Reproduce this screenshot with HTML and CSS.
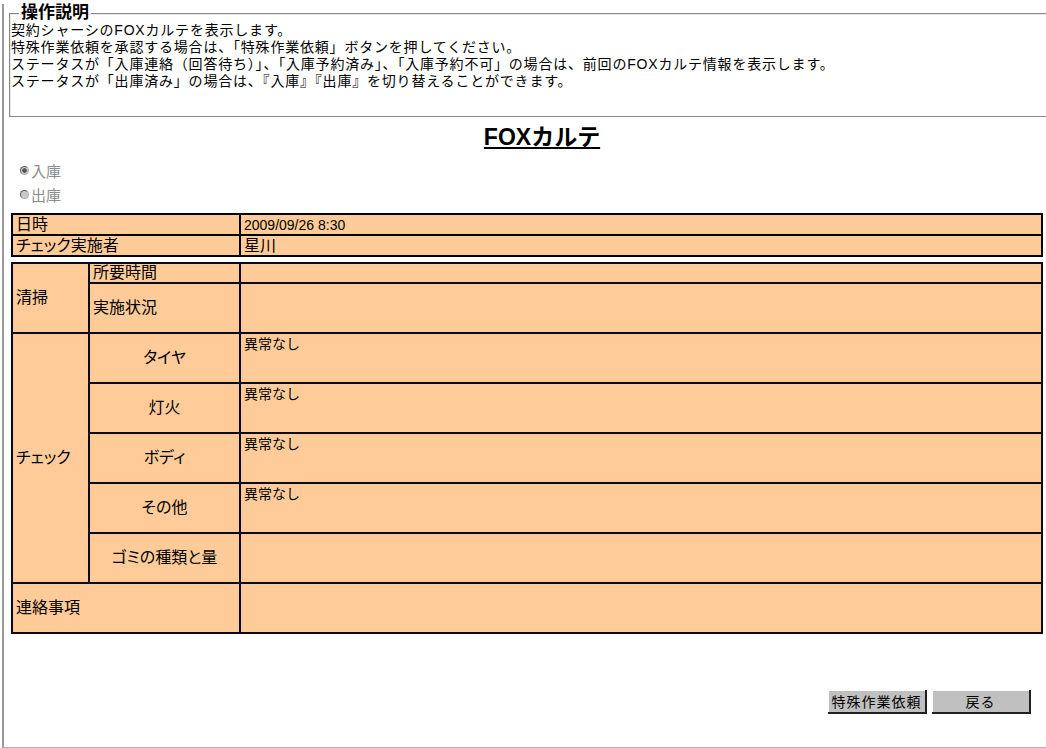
FILE: index.html
```html
<!DOCTYPE html>
<html>
<head>
  <meta charset="utf-8">
  <title>FOXカルテ</title>
  <link rel="stylesheet" href="styles.css">
</head>
<body>
  <div class="frame">
    <!-- 操作説明 -->
    <fieldset class="guide">
      <legend>操作説明</legend>
      <p>契約シャーシのFOXカルテを表示します。</p>
      <p>特殊作業依頼を承認する場合は、「特殊作業依頼」ボタンを押してください。</p>
      <p>ステータスが「入庫連絡（回答待ち）」、「入庫予約済み」、「入庫予約不可」の場合は、前回のFOXカルテ情報を表示します。</p>
      <p>ステータスが「出庫済み」の場合は、『入庫』『出庫』を切り替えることができます。</p>
    </fieldset>

    <h1 class="title"><span>FOXカルテ</span></h1>

    <div class="radios">
      <label><input type="radio" name="io" checked disabled>入庫</label>
      <label><input type="radio" name="io" disabled>出庫</label>
    </div>

    <table class="karte head">
      <tr>
        <th class="w1">日時</th>
        <td class="small">2009/09/26 8:30</td>
      </tr>
      <tr>
        <th class="w1">チェック実施者</th>
        <td>星川</td>
      </tr>
    </table>

    <table class="karte body">
      <tr class="short">
        <th class="c1" rowspan="2">清掃</th>
        <th class="c2 top">所要時間</th>
        <td></td>
      </tr>
      <tr>
        <th class="c2">実施状況</th>
        <td></td>
      </tr>
      <tr>
        <th class="c1" rowspan="5">チェック</th>
        <th class="c2 center">タイヤ</th>
        <td class="top">異常なし</td>
      </tr>
      <tr>
        <th class="c2 center">灯火</th>
        <td class="top">異常なし</td>
      </tr>
      <tr>
        <th class="c2 center">ボディ</th>
        <td class="top">異常なし</td>
      </tr>
      <tr>
        <th class="c2 center">その他</th>
        <td class="top">異常なし</td>
      </tr>
      <tr>
        <th class="c2 center">ゴミの種類と量</th>
        <td></td>
      </tr>
      <tr>
        <th colspan="2">連絡事項</th>
        <td></td>
      </tr>
    </table>

    <div class="buttons">
      <button class="button">特殊作業依頼</button>
      <button class="button">戻る</button>
    </div>
  </div>
</body>
</html>
```

FILE: styles.css
```css
/* 全体 */
body {
  margin: 0;
  background-color: #fff;
  font-family: "Liberation Sans", "Noto Sans CJK JP", sans-serif;
  font-size: 14px;
  color: #000;
  overflow: hidden;
}

.frame {
  margin-left: 2px;
  height: 745px;
  border-left: 2px solid #9a9a9a;
  border-bottom: 2px solid #b4b4b4;
  box-sizing: border-box;
  padding-left: 4px;
}

/* 操作説明 */
.guide {
  margin: 4px -30px 0 1px;
  padding: 0 0 26px 1px;
  border: 1px solid #8a8a8a;
  box-shadow: 1px 1px 0 #e8e8e8 inset;
}

.guide legend {
  margin-left: 8px;
  padding: 0 2px;
  font-size: 17px;
  font-weight: bold;
  line-height: 18px;
}

.guide p {
  margin: 0;
  line-height: 17px;
  letter-spacing: 0.8px;
}

/* タイトル */
.title {
  margin: 6px 0 0;
  padding-left: 30px;
  text-align: center;
  font-size: 23px;
  font-weight: bold;
  line-height: 28px;
}

.title span {
  text-decoration: underline;
  text-decoration-thickness: 2px;
  text-underline-offset: 2px;
}

/* 入庫・出庫 */
.radios {
  margin: 7px 0 0 12px;
  color: #8c8c8c;
  font-size: 15px;
}

.radios label {
  display: flex;
  align-items: center;
  height: 24px;
}

.radios input {
  appearance: none;
  width: 9px;
  height: 9px;
  margin: 0 2px 0 0;
  border-radius: 50%;
  border: 1px solid #b0b0b0;
  border-top-color: #606060;
  border-left-color: #606060;
  background-color: #c8c8c8;
}

.radios input:checked {
  background: radial-gradient(circle, #555 0 2px, #c8c8c8 2.5px);
}

/* カルテ表 */
.karte {
  width: 1032px;
  margin-left: 3px;
  border-collapse: collapse;
  background-color: #ffcc99;
  font-size: 16px;
  font-feature-settings: "palt";
}

.karte th,
.karte td {
  border: 2px solid #0a0a1e;
  padding: 0 3px;
  font-weight: normal;
  text-align: left;
  vertical-align: middle;
  line-height: 18px;
}

.head {
  margin-top: 7px;
  border: 2px solid #000;
}

.head th,
.head td {
  height: 19px;
  border-color: #000;
}

.head .w1 {
  width: 220px;
}

.small {
  font-size: 14px;
}

.body {
  margin-top: 5px;
}

.body tr {
  height: 50px;
}

.body tr.short {
  height: 20px;
}

.body .c1 {
  width: 69px;
}

.body .c2 {
  width: 143px;
}

.body .center {
  text-align: center;
}

.body .top {
  vertical-align: top;
  padding-top: 0;
}

.body td.top {
  font-size: 14px;
  font-feature-settings: normal;
  padding-top: 1px;
}

/* ボタン */
.buttons {
  display: flex;
  justify-content: flex-end;
  gap: 5px;
  margin: 56px 15px 0 0;
}

.button {
  width: 99px;
  height: 24px;
  padding: 0;
  background-color: #c0c0c0;
  border: none;
  border-right: 2px solid #202020;
  border-bottom: 2px solid #202020;
  box-shadow: 1px 1px 0 #fff inset;
  font-family: "Noto Sans CJK JP", sans-serif;
  font-size: 14px;
  line-height: 20px;
  letter-spacing: 1px;
  cursor: pointer;
}
```
